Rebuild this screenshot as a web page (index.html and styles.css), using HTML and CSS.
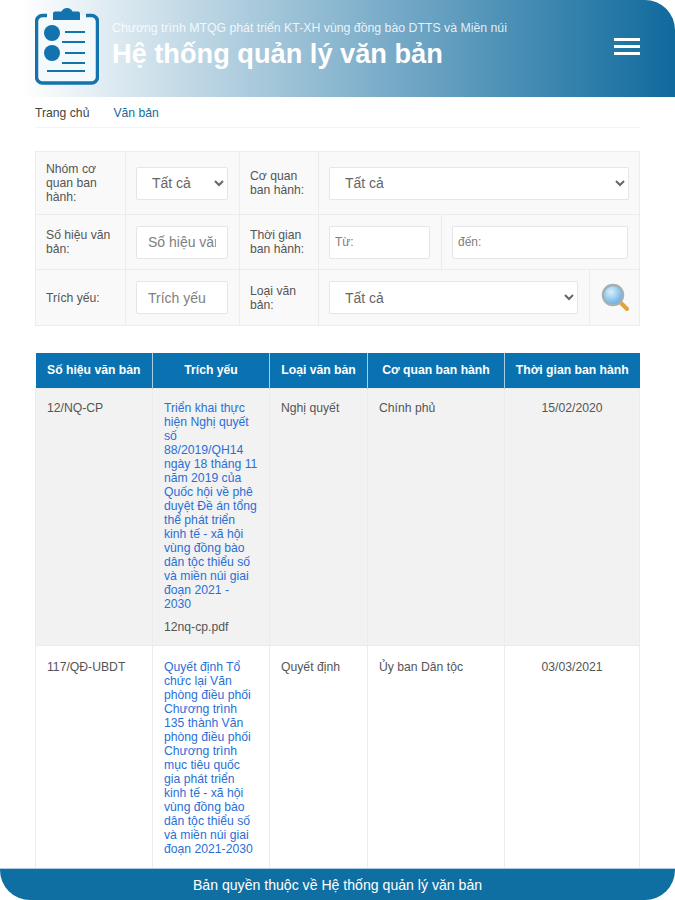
FILE: index.html
```html
<!DOCTYPE html>
<html lang="vi">

<head>
    <meta charset="UTF-8">
    <meta name="viewport" content="width=device-width, initial-scale=1.0">
    <title>Hệ thống quản lý văn bản</title>
    <link rel="stylesheet" href="styles.css">
</head>

<body>
    <header class="top-bar">
        <svg class="logo" width="64" height="80" viewBox="0 0 64 80">
            <path d="M12 10.5H7.5a6 6 0 0 0-6 6V72a6 6 0 0 0 6 6h49a6 6 0 0 0 6-6V16.5a6 6 0 0 0-6-6H51" fill="#f4f9fc" stroke="#1273ae" stroke-width="3.5"/>
            <path d="M18 15V8.5a2 2 0 0 1 2-2h6.5a6 6 0 0 1 11 0H43a2 2 0 0 1 2 2V15z" fill="#1273ae"/>
            <circle cx="17" cy="28" r="8" fill="#1273ae"/>
            <circle cx="17" cy="48" r="8" fill="#1273ae"/>
            <path d="M30 27h20M27 37h23M30 48h20M27 58h23M12 66h38" stroke="#1273ae" stroke-width="2" fill="none"/>
        </svg>
        <div class="top-title">
            <p>Chương trình MTQG phát triển KT-XH vùng đồng bào DTTS và Miền núi</p>
            <h1>Hệ thống quản lý văn bản</h1>
        </div>
        <button class="menu-btn" aria-label="Menu"><span></span><span></span><span></span></button>
    </header>

    <nav class="main-nav">
        <a href="#">Trang chủ</a>
        <a href="#" class="active">Văn bản</a>
    </nav>

    <form class="filter">
        <div class="cell label">Nhóm cơ quan ban hành:</div>
        <div class="cell"><select class="field"><option>Tất cả</option></select></div>
        <div class="cell label">Cơ quan ban hành:</div>
        <div class="cell span-3"><select class="field"><option>Tất cả</option></select></div>

        <div class="cell label">Số hiệu văn bản:</div>
        <div class="cell"><input class="field" type="text" placeholder="Số hiệu văn bản"></div>
        <div class="cell label">Thời gian ban hành:</div>
        <div class="cell"><input class="field small" type="text" placeholder="Từ:"></div>
        <div class="cell span-2"><input class="field small" type="text" placeholder="đến:"></div>

        <div class="cell label">Trích yếu:</div>
        <div class="cell"><input class="field" type="text" placeholder="Trích yếu"></div>
        <div class="cell label">Loại văn bản:</div>
        <div class="cell span-2"><select class="field"><option>Tất cả</option></select></div>
        <div class="cell search-cell">
            <svg width="30" height="30" viewBox="0 0 30 30">
                <defs>
                    <radialGradient id="lens" cx="0.4" cy="0.35" r="0.7">
                        <stop offset="0" stop-color="#d8f0fc"/>
                        <stop offset="1" stop-color="#5fa9e0"/>
                    </radialGradient>
                </defs>
                <path d="M19 19l7 7" stroke="#dfa43c" stroke-width="4" stroke-linecap="round"/>
                <circle cx="12" cy="12" r="10" fill="url(#lens)" stroke="#a3b0b6" stroke-width="2.5"/>
            </svg>
        </div>
    </form>

    <table class="docs">
        <thead>
            <tr>
                <th>Số hiệu văn bản</th>
                <th>Trích yếu</th>
                <th>Loại văn bản</th>
                <th>Cơ quan ban hành</th>
                <th>Thời gian ban hành</th>
            </tr>
        </thead>
        <tbody>
            <tr class="odd">
                <td>12/NQ-CP</td>
                <td>
                    <a href="#">Triển khai thực hiện Nghị quyết số 88/2019/QH14 ngày 18 tháng 11 năm 2019 của Quốc hội về phê duyệt Đề án tổng thể phát triển kinh tế - xã hội vùng đồng bào dân tộc thiểu số và miền núi giai đoạn 2021 - 2030</a>
                    <p class="file">12nq-cp.pdf</p>
                </td>
                <td>Nghị quyết</td>
                <td>Chính phủ</td>
                <td class="center">15/02/2020</td>
            </tr>
            <tr>
                <td>117/QĐ-UBDT</td>
                <td class="last-cell">
                    <a href="#">Quyết định Tổ chức lại Văn phòng điều phối Chương trình 135 thành Văn phòng điều phối Chương trình mục tiêu quốc gia phát triển kinh tế - xã hội vùng đồng bào dân tộc thiểu số và miền núi giai đoạn 2021-2030</a>
                </td>
                <td>Quyết định</td>
                <td>Ủy ban Dân tộc</td>
                <td class="center">03/03/2021</td>
            </tr>
        </tbody>
    </table>

    <footer class="bottom-bar">Bản quyền thuộc về Hệ thống quản lý văn bản</footer>
</body>

</html>
```

FILE: styles.css
```css
html,
body {
    height: 100%;
}

body {
    margin: 0;
    position: relative;
    overflow: hidden;
    background: #fff;
    color: #444;
    font-family: "Liberation Sans", Arial, sans-serif;
    font-size: 12.2px;
    line-height: 14px;
}

.top-bar {
    height: 97px;
    box-sizing: border-box;
    padding: 5px 35px 0;
    display: flex;
    align-items: flex-start;
    border-top-right-radius: 30px;
    background: linear-gradient(to right, #fff 3%, #0f6a9d 100%);
}

.logo {
    flex: none;
}

.top-title {
    flex: 1;
    margin-left: 13px;
    margin-top: 16px;
    color: #fff;
}

.top-title p {
    margin: 0 0 4px;
    font-size: 12.3px;
    line-height: 14px;
    color: rgba(255, 255, 255, 0.85);
}

.top-title h1 {
    margin: 0;
    font-size: 27.2px;
    line-height: 30px;
    font-weight: 700;
}

.menu-btn {
    width: 26px;
    margin-top: 33px;
    padding: 0;
    border: none;
    background: none;
    display: flex;
    flex-direction: column;
    gap: 4px;
}

.menu-btn span {
    height: 3px;
    background: #fff;
}

.main-nav {
    margin: 0 35px;
    height: 31px;
    box-sizing: border-box;
    padding-top: 9px;
    display: flex;
    gap: 24px;
    border-bottom: 1px solid #f3f3f3;
}

.main-nav a {
    color: #444;
    text-decoration: none;
}

.main-nav a.active {
    color: #146c9e;
}

.filter {
    margin: 23px 35px 0;
    display: grid;
    grid-template-columns: 90px 114px 79px 123px 148px 50px;
    grid-template-rows: 63px 55px 56px;
    border-top: 1px solid #ececec;
    border-left: 1px solid #ececec;
    width: 605px;
    box-sizing: border-box;
    background: #f9f9f9;
}

.cell {
    padding: 0 11px 0 10px;
    display: flex;
    align-items: center;
    box-sizing: border-box;
    border-right: 1px solid #ececec;
    border-bottom: 1px solid #ececec;
    min-width: 0;
}

.label {
    color: #555;
}

.span-2 {
    grid-column: span 2;
}

.span-3 {
    grid-column: span 3;
    padding-right: 10px;
}

.field {
    width: 100%;
    height: 33px;
    box-sizing: border-box;
    padding: 0 11px;
    border: 1px solid #e6e6e6;
    border-radius: 2px;
    background: #fff;
    color: #666;
    font-family: "Liberation Sans", Arial, sans-serif;
    font-size: 14px;
}

.field.small {
    padding: 0 5px;
    font-size: 12px;
}

.field::placeholder {
    color: #808080;
    opacity: 1;
}

.search-cell {
    padding: 0 0 0 11px;
}

.docs {
    margin: 27px 35px 0;
    width: 605px;
    table-layout: fixed;
    border-collapse: collapse;
}

.docs th {
    height: 35px;
    padding: 0 5px;
    background: #0a72b1;
    color: #fff;
    font-weight: 700;
    border-right: 1px solid #a9cde3;
    box-sizing: border-box;
}

.docs th:last-child {
    border-right: none;
}

.docs th:nth-child(1) {
    width: 117px;
}

.docs th:nth-child(2) {
    width: 117px;
}

.docs th:nth-child(3) {
    width: 98px;
}

.docs th:nth-child(4) {
    width: 137px;
}

.docs td {
    padding: 12px 11px 11px;
    vertical-align: top;
    border: 1px solid #ececec;
    color: #555;
}

.docs tbody tr + tr td {
    padding-top: 14px;
}

.docs tbody tr + tr .last-cell {
    padding-bottom: 40px;
}

.docs tr.odd td {
    background: #f2f2f2;
}

.docs a {
    color: #2a6fd6;
    text-decoration: none;
}

.docs .center {
    text-align: center;
}

.file {
    margin: 9px 0 0;
}

.bottom-bar {
    position: absolute;
    left: 0;
    right: 0;
    bottom: 0;
    height: 32px;
    line-height: 32px;
    text-align: center;
    background: #0f6fa3;
    border-top: 1px solid #a9cde3;
    box-sizing: border-box;
    color: #fff;
    font-size: 14.1px;
    border-bottom-left-radius: 30px;
    border-bottom-right-radius: 30px;
}
```
